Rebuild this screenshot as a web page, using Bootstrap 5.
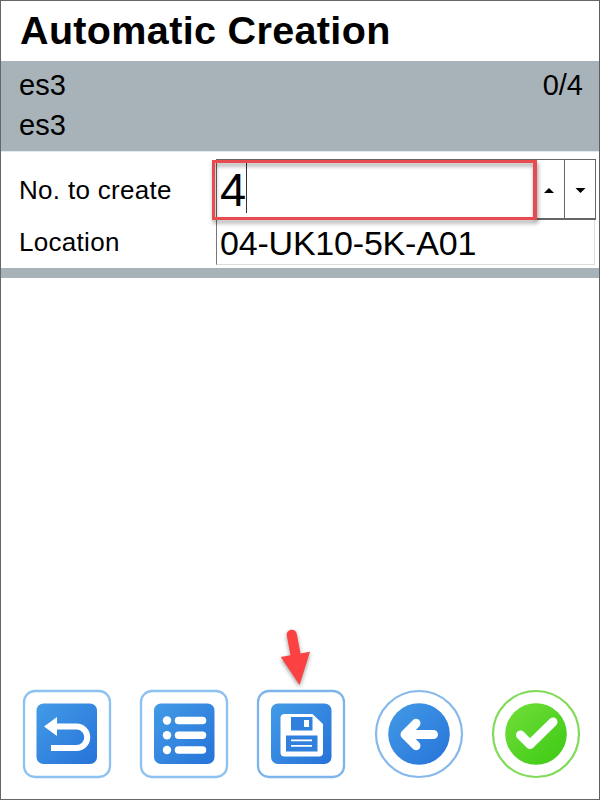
<!DOCTYPE html>
<html lang="en">
<head>
<meta charset="utf-8">
<meta name="viewport" content="width=device-width, initial-scale=1">
<title>Automatic Creation</title>
<link href="https://cdn.jsdelivr.net/npm/bootstrap@5.3.0/dist/css/bootstrap.min.css" rel="stylesheet">
<style>
body { font-family: "Liberation Sans", Arial, sans-serif; color: #000; background: #fff; }
.screen { width: 600px; height: 800px; border: 1px solid #666; border-right-color: #5f5f5f; overflow: hidden; }
.screen-title { font-size: 39.500px; line-height: 58px; height: 60px; padding-left: 19px; letter-spacing: .35px; }
.info-band { background: #a8b2b9; height: 90px; padding: 4px 16px 0 18px; font-size: 29px; line-height: 40px; }
.info-name { letter-spacing: .1px; }
.entry-form { height: 117px; padding: 7px 3px 0 18px; border-top: 1px solid #e4e9ee; }
.entry-label { width: 197px; font-size: 26px; letter-spacing: .3px; white-space: nowrap; }
.row-count { height: 61px; }
.row-count .entry-label { line-height: 62px; }
.row-place { height: 45px; }
.row-place .entry-label { line-height: 45px; }
.count-box { border: 1px solid #666; border-bottom-width: 2px; position: relative; }
.count-value { font-size: 47px; line-height: 59px; padding-left: 3px; width: 318px; }
.caret-bar { width: 1px; height: 50px; background: #333; margin: 3px 0 0 0; }
.step { width: 31px; background: #fff; border: 0; border-left: 1px solid #666; padding: 0; }
.step-up { width: 29px; border-left: 0; }
.highlight { position: absolute; left: -5px; top: 0; width: 325px; height: 60px; border: 3.500px solid #e84b4f; border-width: 3px 4px 3px 3px; filter: drop-shadow(1px 3px 2px rgba(0,0,0,.4)); }
.place-box { border: 1px solid #ddd; border-left: 1px solid #777; border-top: 0; font-size: 34px; line-height: 46px; padding-left: 3px; margin-right: 1px; letter-spacing: -.2px; }
.divider-bar { height: 10px; background: #a8b2b9; }
.pointer { height: 64px; padding-left: 272px; }
.toolbar { padding: 0 18px 20px 20.500px; }
.tool { width: 90px; height: 90px; padding: 0; border: 0; background: none; }
svg { display: block; }
</style>
</head>
<body>
<main class="screen d-flex flex-column">
  <h1 class="screen-title fw-bold m-0">Automatic Creation</h1>
  <section class="info-band flex-shrink-0">
    <div class="d-flex justify-content-between"><span class="info-name">es3</span><span>0/4</span></div>
    <div class="info-name">es3</div>
  </section>
  <section class="entry-form flex-shrink-0">
    <div class="row-count d-flex">
      <div class="entry-label flex-shrink-0">No. to create</div>
      <div class="count-box d-flex flex-grow-1">
        <div class="count-value d-flex">4<span class="caret-bar"></span></div>
        <button class="step step-up" aria-label="Increase"><svg width="28" height="58"><path d="M9 33h10l-5-5z"/></svg></button>
        <button class="step" aria-label="Decrease"><svg width="30" height="58"><path d="M10.500 28h10l-5 5z"/></svg></button>
        <div class="highlight"></div>
      </div>
    </div>
    <div class="row-place d-flex">
      <div class="entry-label flex-shrink-0">Location</div>
      <div class="place-box flex-grow-1">04-UK10-5K-A01</div>
    </div>
  </section>
  <div class="divider-bar flex-shrink-0"></div>
  <div class="pointer mt-auto">
    <svg width="46" height="64" overflow="visible">
      <path d="M13.800 10.500C13 4 22.800 2.500 23.800 9L27.500 28.500 37 26.800 26.500 60 7.800 32 17.500 30.300Z" fill="#fb4141" filter="drop-shadow(0 2px 2px rgba(0,0,0,.4))"/>
    </svg>
  </div>
  <nav class="toolbar d-flex justify-content-between" aria-label="Actions">
    <button class="tool" aria-label="Undo">
      <svg width="90" height="90" viewBox="0 0 90 90">
        <defs>
          <linearGradient id="blue" x1="0" y1="0" x2="1" y2="1"><stop stop-color="#439be6"/><stop offset="1" stop-color="#2673d9"/></linearGradient>
          <linearGradient id="green" x1="0" y1="0" x2="1" y2="1"><stop stop-color="#73df3b"/><stop offset="1" stop-color="#3bc912"/></linearGradient>
        </defs>
        <rect x="2" y="2" width="86" height="86" rx="11" fill="#fff" stroke="#8dc1f1" stroke-width="2.300"/>
        <rect x="14.500" y="14.500" width="60.500" height="60.500" rx="7" fill="url(#blue)"/>
        <path d="M34 37.500H54.500a10.700 10.700 0 0 1 0 21.500H29" fill="none" stroke="#fff" stroke-width="6"/>
        <path d="M22 37.500 35 28v19z" fill="#fff"/>
      </svg>
    </button>
    <button class="tool" aria-label="List">
      <svg width="90" height="90" viewBox="0 0 90 90">
        <rect x="2" y="2" width="86" height="86" rx="11" fill="#fff" stroke="#8dc1f1" stroke-width="2.300"/>
        <rect x="15" y="14.500" width="60.500" height="60.500" rx="7" fill="url(#blue)"/>
        <g fill="#fff"><circle cx="28" cy="31.500" r="4.200"/><circle cx="28" cy="46.200" r="4.200"/><circle cx="28" cy="61" r="4.200"/></g>
        <path d="M39.500 31.500H63.500M39.500 46.200H63.500M39.500 61H63.500" stroke="#fff" stroke-width="7.500" stroke-linecap="round"/>
      </svg>
    </button>
    <button class="tool" aria-label="Save">
      <svg width="90" height="90" viewBox="0 0 90 90">
        <rect x="2" y="2" width="86" height="86" rx="11" fill="#fff" stroke="#7fb4ea" stroke-width="2.300"/>
        <rect x="15" y="14.500" width="60.500" height="60.500" rx="7" fill="url(#blue)"/>
        <path d="M28 25H56.500L67 35V63.500a4 4 0 0 1-4 4H28.500a4 4 0 0 1-4-4V29a4 4 0 0 1 3.500-4z" fill="#fff"/>
        <path d="M35 28H56.500V41.500H35zM30 46.500H61.500V62.500H30z" fill="#3180de"/>
        <path d="M48 31h5v7h-5zM35 50.500h21v1.800H35zM35 56h21v1.800H35z" fill="#fff"/>
      </svg>
    </button>
    <button class="tool" aria-label="Back">
      <svg width="90" height="90" viewBox="0 0 90 90">
        <circle cx="45" cy="45" r="43" fill="#fff" stroke="#86b9eb" stroke-width="2.200"/>
        <circle cx="45" cy="45" r="30.800" fill="url(#blue)"/>
        <path d="M59.500 45.500H34M42 34.300 31 45.500 42 56.700" fill="none" stroke="#fff" stroke-width="9" stroke-linecap="round" stroke-linejoin="round"/>
      </svg>
    </button>
    <button class="tool" aria-label="Confirm">
      <svg width="90" height="90" viewBox="0 0 90 90">
        <circle cx="45" cy="45" r="43" fill="#fff" stroke="#80db58" stroke-width="2.200"/>
        <circle cx="45" cy="45" r="30.800" fill="url(#green)"/>
        <path d="M29.500 46 39 55.500 62 33" fill="none" stroke="#fff" stroke-width="9" stroke-linecap="round" stroke-linejoin="round"/>
      </svg>
    </button>
  </nav>
</main>
<script src="https://cdn.jsdelivr.net/npm/bootstrap@5.3.0/dist/js/bootstrap.bundle.min.js"></script>
</body>
</html>
